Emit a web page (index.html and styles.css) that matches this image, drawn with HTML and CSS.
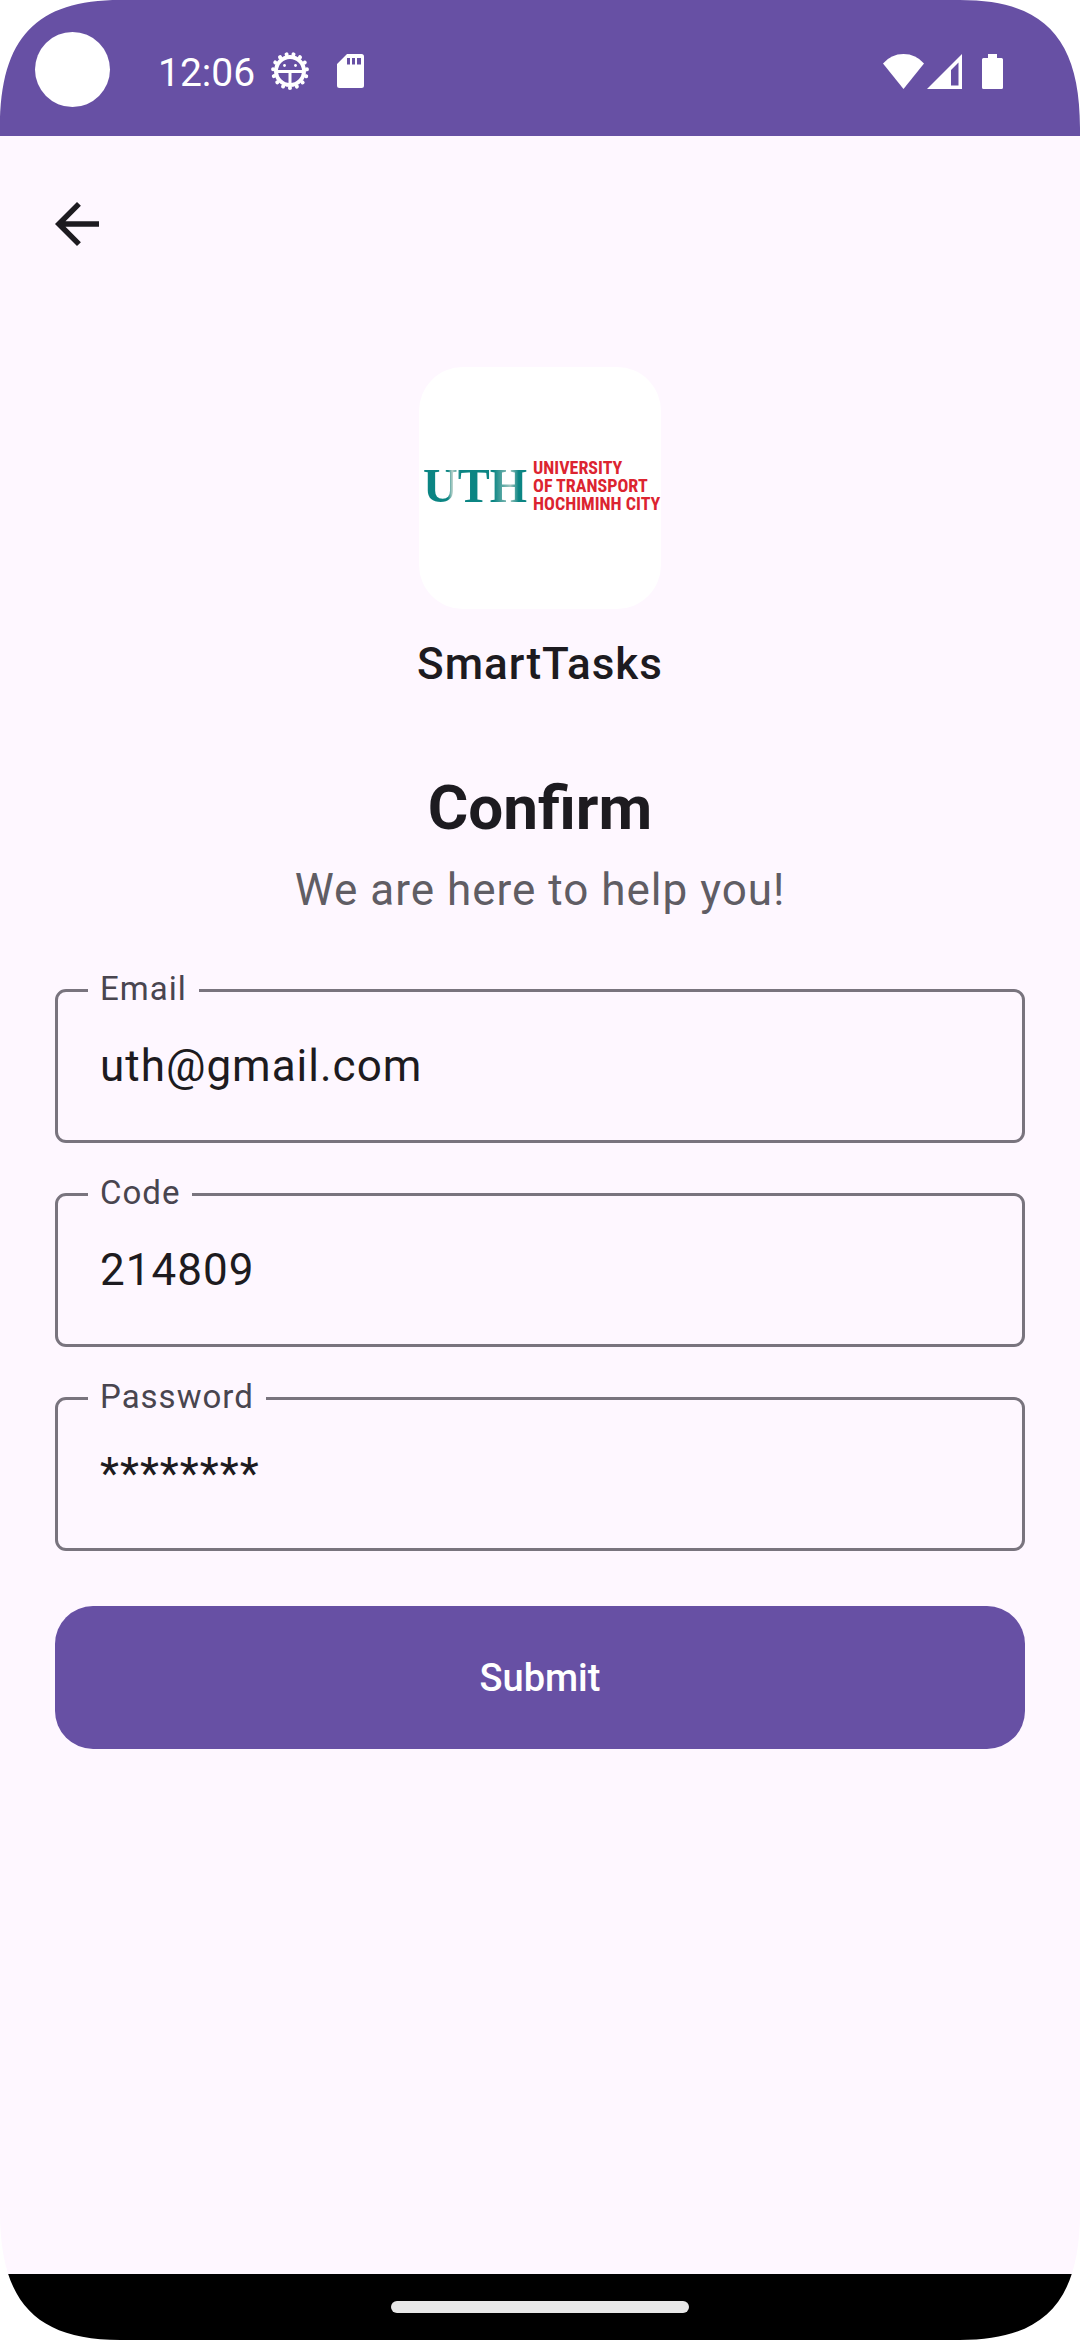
FILE: index.html
```html
<!DOCTYPE html>
<html lang="en">
<head>
<meta charset="utf-8">
<meta name="viewport" content="width=device-width, initial-scale=1">
<title>SmartTasks – Confirm</title>
<link rel="stylesheet" href="styles.css">
</head>
<body>
<div class="screen">
  <header class="status">
    <span class="camera"></span>
    <time class="clock">12:06</time>
    <svg class="icon-debug" viewBox="0 0 40 40" aria-hidden="true">
      <g fill="none" stroke="#fff">
        <circle cx="20" cy="20" r="14" stroke-width="4"/>
        <circle cx="20" cy="20" r="17" stroke-width="4" stroke-linecap="round" pathLength="150" stroke-dasharray="0.1 9.9" transform="rotate(90 20 20)"/>
        <path d="M8 20.500H32M20 20.500V33" stroke-width="3"/>
      </g>
      <circle cx="14.500" cy="14.500" r="1.400" fill="#fff"/>
      <circle cx="25.500" cy="14.500" r="1.400" fill="#fff"/>
    </svg>
    <svg class="icon-card" viewBox="0 0 27 34" aria-hidden="true">
      <path fill="#fff" fill-rule="evenodd" d="M10 0H24.500Q27 0 27 2.500V31.500Q27 34 24.500 34H2.500Q0 34 0 31.500V10ZM10 4V10.500H13V4ZM15 4V10.500H18V4ZM20 4V10.500H24V4Z"/>
    </svg>
    <div class="system">
      <svg class="icon-wifi" viewBox="0 0 41 35" aria-hidden="true"><path fill="#fff" d="M0 9.500Q8 0 20.500 0T41 9.500L20.500 35Z"/></svg>
      <svg class="icon-signal" viewBox="0 0 35 35" aria-hidden="true"><path fill="#fff" fill-rule="evenodd" d="M35 0V35H0ZM31.500 8.500L24 16V31.500H31.500Z"/></svg>
      <svg class="icon-battery" viewBox="0 0 21 35" aria-hidden="true"><path fill="#fff" d="M6 0H15V4H19.500Q21 4 21 5.500V33.500Q21 35 19.500 35H1.500Q0 35 0 33.500V5.500Q0 4 1.500 4H6Z"/></svg>
    </div>
  </header>

  <main class="page">
    <button class="back" type="button" aria-label="Back">
      <svg viewBox="0 0 44 44" aria-hidden="true"><path fill="#1d1b20" d="M44 19.250V24.750H10.500L25.900 40.150L22 44L0 22L22 0L25.900 3.850L10.500 19.250Z"/></svg>
    </button>

    <div class="logo">
      <span class="logo-mark">UTH</span>
      <span class="logo-name">UNIVERSITY<br>OF TRANSPORT<br>HOCHIMINH CITY</span>
    </div>
    <p class="brand">SmartTasks</p>

    <h1 class="title">Confirm</h1>
    <p class="subtitle">We are here to help you!</p>

    <form class="form">
      <div class="field">
        <label for="email">Email</label>
        <input id="email" type="text" value="uth@gmail.com">
      </div>
      <div class="field">
        <label for="code">Code</label>
        <input id="code" type="text" value="214809">
      </div>
      <div class="field">
        <label for="password">Password</label>
        <input id="password" type="text" value="********">
      </div>
      <button class="submit" type="button">Submit</button>
    </form>
  </main>

  <footer class="navbar"><span class="handle"></span></footer>

  <svg class="corner top left" viewBox="0 0 120 128" aria-hidden="true"><path fill="#fff" d="M0 0H120C37 0 0 37 0 128Z"/></svg>
  <svg class="corner top right" viewBox="0 0 120 128" aria-hidden="true"><path fill="#fff" d="M120 0H0C83 0 120 37 120 128Z"/></svg>
  <svg class="corner bottom left" viewBox="0 0 120 128" aria-hidden="true"><path fill="#fff" d="M0 128H120C37 128 0 91 0 0Z"/></svg>
  <svg class="corner bottom right" viewBox="0 0 120 128" aria-hidden="true"><path fill="#fff" d="M120 128H0C83 128 120 91 120 0Z"/></svg>
</div>
</body>
</html>
```
FILE: styles.css
```css
* { box-sizing: border-box; }

body {
  margin: 0;
  background: #fff;
  color: #1d1b20;
  font-family: Roboto, "Liberation Sans", sans-serif;
}

.screen {
  position: relative;
  display: flex;
  flex-direction: column;
  min-height: 100vh;
  background: #fef7ff;
}

/* Status bar */
.status {
  display: flex;
  align-items: center;
  height: 136px;
  padding: 2px 77px 0 35px;
  background: #6750a4;
  color: #fff;
}
.status svg { display: block; flex: none; margin-top: 4px; }
.camera { width: 75px; height: 75px; border-radius: 50%; background: #fff; }
.clock { margin-left: 48px; font-size: 39px; line-height: 48px; margin-top: 8px; }
.icon-debug { width: 40px; height: 40px; margin-left: 15px; }
.icon-card { width: 27px; height: 34px; margin-left: 27px; }
.system { display: flex; margin-left: auto; }
.icon-wifi { width: 41px; height: 35px; }
.icon-signal { width: 35px; height: 35px; margin-left: 3px; }
.icon-battery { width: 21px; height: 35px; margin-left: 20px; }

/* Page content */
.page {
  flex: 1;
  display: flex;
  flex-direction: column;
  align-items: center;
  padding: 66px 55px 0;
}
.back {
  align-self: flex-start;
  width: 44px;
  height: 44px;
  padding: 0;
  border: 0;
  background: none;
}
.back svg { display: block; width: 44px; height: 44px; }

.logo {
  display: flex;
  align-items: center;
  gap: 6px;
  width: 242px;
  height: 242px;
  margin-top: 121px;
  padding: 0 0 4px 4px;
  border-radius: 44px;
  background: #fff;
  white-space: nowrap;
  overflow: hidden;
}
.logo-mark {
  background: linear-gradient(90deg, #0b8583 24%, #b5cfc8 28%, #0b8583 36%, #0b8583 68%, #9fc6c0 84%, #0b8583 92%);
  background-clip: text;
  color: transparent;
  font: bold 48px/56px "Liberation Serif", serif;
}
.logo-name {
  color: #dc2430;
  font: bold 18px/18px "Roboto Condensed", "Liberation Sans Narrow", "Liberation Sans", sans-serif;
}

.brand, .subtitle, .title { margin: 0; text-align: center; }
.brand, .subtitle, .field input { font-size: 44px; letter-spacing: 1px; }
.brand { margin-top: 22px; line-height: 66px; font-weight: 500; }
.title { margin-top: 66px; font-size: 62px; line-height: 90px; font-weight: 700; }
.subtitle { margin-top: 4px; line-height: 66px; color: #605d64; }

/* Outlined text fields */
.form {
  display: flex;
  flex-direction: column;
  gap: 50px;
  width: 100%;
  margin-top: 66px;
}
.field { position: relative; }
.field label {
  position: absolute;
  top: -22px;
  left: 33px;
  padding: 0 12px;
  background: #fef7ff;
  color: #49454f;
  font-size: 33px;
  line-height: 44px;
  letter-spacing: 1px;
}
.field input {
  display: block;
  width: 100%;
  height: 154px;
  padding: 0 42px;
  border: 3px solid #79747e;
  border-radius: 11px;
  background: none;
  color: inherit;
  font-family: inherit;
}
.submit {
  height: 143px;
  margin-top: 5px;
  border: 0;
  border-radius: 38px;
  background: #6750a4;
  color: #fff;
  font-family: inherit;
  font-size: 38px;
  font-weight: 500;
}

/* Gesture bar */
.navbar {
  display: flex;
  align-items: center;
  justify-content: center;
  height: 66px;
  background: #000;
}
.handle { width: 298px; height: 12px; border-radius: 6px; background: #e8e8e8; }

/* Rounded display corners laid over the screen */
.corner { position: absolute; width: 120px; height: 128px; }
.top { top: 0; }
.bottom { bottom: 0; }
.left { left: 0; }
.right { right: 0; }
```
